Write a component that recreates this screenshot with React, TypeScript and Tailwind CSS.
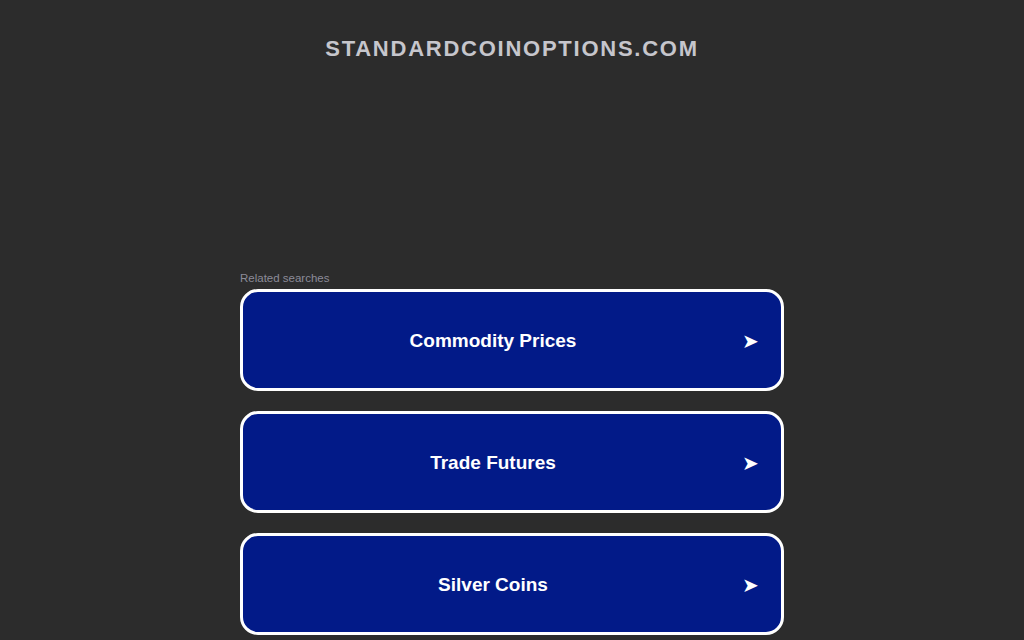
import React from "react";

const ITEMS = ["Commodity Prices", "Trade Futures", "Silver Coins"];

export default function App() {
  return (
    <div
      className="min-h-[640px] w-full bg-[#2c2c2c] overflow-hidden"
      style={{ fontFamily: '"Liberation Sans", Arial, sans-serif' }}
    >
      <div className="pt-[36px] text-center text-[22px] font-bold leading-[26px] tracking-[1.75px] text-[#c6c6cc]">
        STANDARDCOINOPTIONS.COM
      </div>

      <div className="mx-auto mt-[210px] w-[544px]">
        <div className="mb-[4px] text-[11.5px] leading-[13px] text-[#8b8b98]">Related searches</div>
        <div className="flex flex-col gap-[20px]">
          {ITEMS.map((t) => (
            <div
              key={t}
              className="flex h-[102px] items-center rounded-[18px] border-[3px] border-white bg-[#021a88] pt-[2px] text-white"
            >
              <span className="flex-1 pl-[26px] text-center text-[19px] font-bold">{t}</span>
              <span className="w-[64px] pl-[2px] text-center text-[20px]">➤</span>
            </div>
          ))}
        </div>
      </div>
    </div>
  );
}
